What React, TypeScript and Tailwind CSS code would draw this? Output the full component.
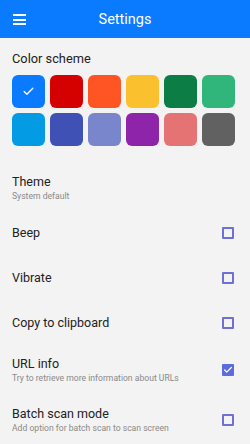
import { Check } from "lucide-react";

const swatches = [
  "bg-[#0a7bff]",
  "bg-[#d50000]",
  "bg-[#ff5424]",
  "bg-[#fbc02d]",
  "bg-[#0b7d45]",
  "bg-[#30b67a]",
  "bg-[#049be5]",
  "bg-[#3f51b5]",
  "bg-[#7986cb]",
  "bg-[#8e24aa]",
  "bg-[#e57373]",
  "bg-[#616161]",
];

type Row = {
  title: string;
  subtitle?: string;
  checkbox?: boolean;
  checked?: boolean;
  height: string;
};

const rows: Row[] = [
  { title: "Theme", subtitle: "System default", height: "h-[44px]" },
  { title: "Beep", checkbox: true, height: "h-[45px]" },
  { title: "Vibrate", checkbox: true, height: "h-[45px]" },
  { title: "Copy to clipboard", checkbox: true, height: "h-[45px]" },
  {
    title: "URL info",
    subtitle: "Try to retrieve more information about URLs",
    checkbox: true,
    checked: true,
    height: "h-[50px]",
  },
  {
    title: "Batch scan mode",
    subtitle: "Add option for batch scan to scan screen",
    checkbox: true,
    height: "h-[50px]",
  },
];

function Checkbox({ checked }: { checked?: boolean }) {
  if (checked) {
    return (
      <span className="flex h-[12px] w-[12px] items-center justify-center rounded-[1px] bg-[#5b6be0]">
        <Check size={10} strokeWidth={3} color="#ffffff" />
      </span>
    );
  }
  return <span className="block h-[12px] w-[12px] rounded-[1px] border-2 border-[#6e70d6]" />;
}

export default function App() {
  return (
    <div className="h-[444px] w-[250px] overflow-hidden bg-[#f3f3f3] font-['Roboto',sans-serif]">
      <header className="relative flex h-[38px] items-center justify-center bg-[#0a7bff]">
        <div className="absolute left-[13px] top-[14px] flex w-[13px] flex-col gap-[2.5px]">
          <span className="block h-[2px] bg-white" />
          <span className="block h-[2px] bg-white" />
          <span className="block h-[2px] bg-white" />
        </div>
        <h1 className="pt-[3px] text-[14.5px] leading-none text-white">Settings</h1>
      </header>

      <section className="px-[12px] pt-[13px]">
        <h2 className="text-[12.8px] leading-[16px] text-[#222]">Color scheme</h2>
        <div className="mt-[8px] grid w-[223px] grid-cols-6 gap-[5px]">
          {swatches.map((c, i) => (
            <div
              key={c}
              className={`flex h-[33px] items-center justify-center rounded-[6px] ${c}`}
            >
              {i === 0 && <Check size={13} strokeWidth={2.5} color="#ffffff" />}
            </div>
          ))}
        </div>
      </section>

      <div className="mt-[20px]">
        {rows.map((r) => (
          <div key={r.title} className={`flex items-center pl-[12px] pr-[16px] ${r.height}`}>
            <div className="min-w-0 flex-1">
              <div className="text-[12.5px] leading-[16px] text-[#222]">{r.title}</div>
              {r.subtitle && (
                <div className="text-[8.6px] leading-[12px] text-[#8a8a8a]">{r.subtitle}</div>
              )}
            </div>
            {r.checkbox && <Checkbox checked={r.checked} />}
          </div>
        ))}
      </div>
    </div>
  );
}
